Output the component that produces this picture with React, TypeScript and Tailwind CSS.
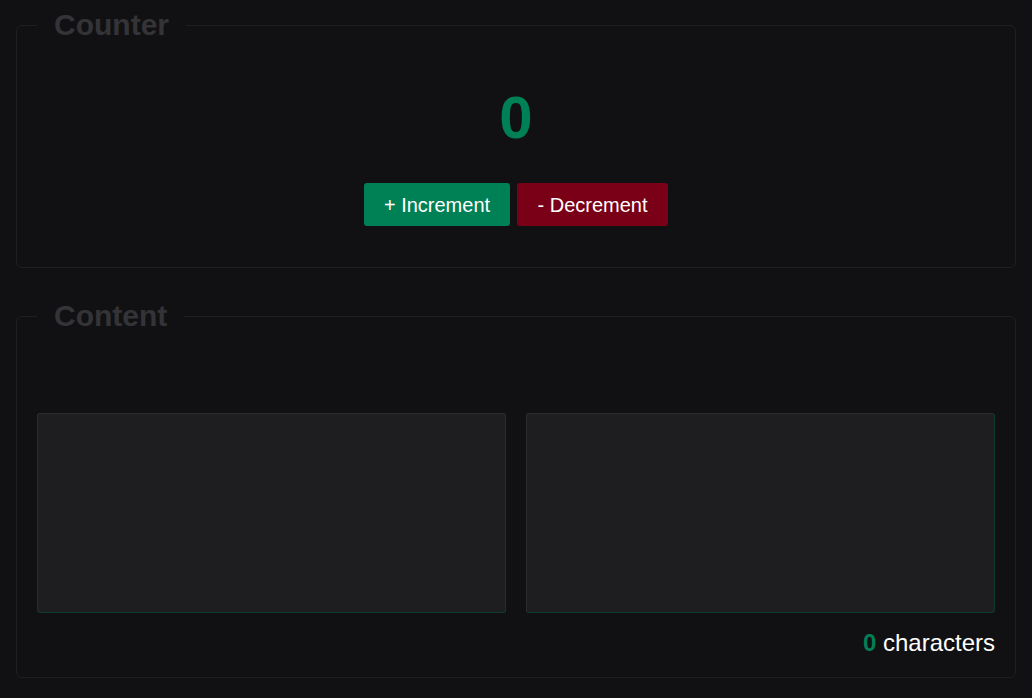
import { useState } from 'react'

export default function App() {
  const [count, setCount] = useState(0)
  const [a, setA] = useState('')
  const [b, setB] = useState('')

  return (
    <div className="min-h-[698px] bg-[#111113] px-4 pt-[7px] pb-5 font-['Liberation_Sans',Arial,sans-serif]">
      {/* Counter */}
      <fieldset className="rounded-md border border-[#1f1f22] px-5 pb-[41px]">
        <legend className="px-[17px] text-[30px] font-bold leading-9 text-[#343438]">Counter</legend>
        <div className="flex flex-col items-center">
          <div className="mt-[39px] text-[60px] font-bold leading-[72px] text-[#008055]">{count}</div>
          <div className="mt-[29px] flex gap-[7px]">
            <button
              onClick={() => setCount(count + 1)}
              className="h-[43px] w-[146px] rounded-[3px] bg-[#008055] text-[20px] text-white"
            >
              + Increment
            </button>
            <button
              onClick={() => setCount(count - 1)}
              className="h-[43px] w-[151px] rounded-[3px] bg-[#790016] text-[20px] text-white"
            >
              - Decrement
            </button>
          </div>
        </div>
      </fieldset>

      {/* Content */}
      <fieldset className="mt-[30px] rounded-md border border-[#1f1f22] px-5 pb-[19px]">
        <legend className="px-[17px] text-[30px] font-bold leading-9 text-[#343438]">Content</legend>
        <div className="mt-[79px] grid grid-cols-2 gap-5">
          <textarea
            value={a}
            onChange={e => setA(e.target.value)}
            className="h-[200px] resize-none rounded-[3px] border border-t-[#2c2c2f] border-l-[#2c2c2f] border-r-[#0d3b2e] border-b-[#0d3b2e] bg-[#1e1e20] p-2 text-white outline-none"
          />
          <textarea
            value={b}
            onChange={e => setB(e.target.value)}
            className="h-[200px] resize-none rounded-[3px] border border-t-[#2c2c2f] border-l-[#2c2c2f] border-r-[#0d3b2e] border-b-[#0d3b2e] bg-[#1e1e20] p-2 text-white outline-none"
          />
        </div>
        <div className="mt-[15px] text-right text-[24px] leading-[30px] text-white">
          <span className="font-bold text-[#008055]">{(a + b).length}</span> characters
        </div>
      </fieldset>
    </div>
  )
}
